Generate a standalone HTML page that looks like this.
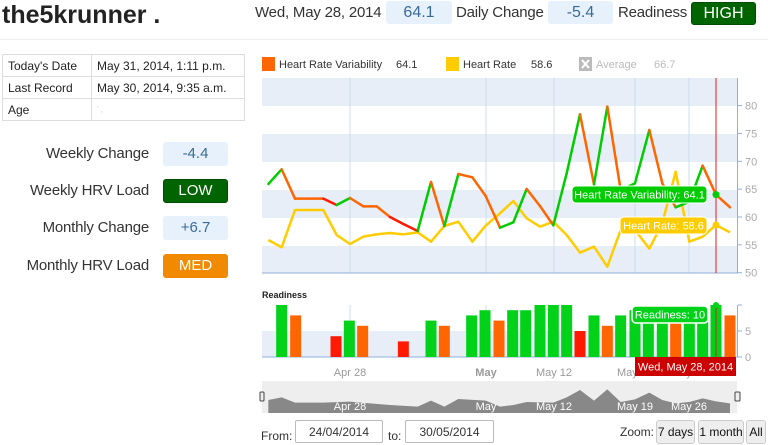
<!DOCTYPE html>
<html><head><meta charset="utf-8">
<style>
*{margin:0;padding:0;box-sizing:border-box}
body{width:768px;height:445px;background:#fff;font-family:"Liberation Sans",Arial,sans-serif;position:relative;overflow:hidden;color:#333}
.a{position:absolute}
.box{position:absolute;text-align:center;border-radius:3px}
.blue{background:#e7f1fb;color:#3a6a98}
.g{background:#006400;color:#fff;border:1px solid #004d00}
.o{background:#f28a00;color:#fff}
table{position:absolute;left:2px;top:54px;width:243px;border-collapse:collapse;font-size:12px;color:#222}
td{border:1px solid #ddd;height:22px;padding-left:5px}
.lbl{position:absolute;right:619px;font-size:15px;color:#333;text-align:right;white-space:nowrap;letter-spacing:-0.2px}
.inp{position:absolute;border:1px solid #bbb;border-radius:2px;font-size:12px;text-align:center;line-height:22px;height:23px}
.btn{position:absolute;background:#eee;border:1px solid #ccc;border-radius:3px;font-size:12px;text-align:center;line-height:22px;height:24px;color:#111}
.h{position:absolute;top:4px;font-size:15px;line-height:18px;letter-spacing:-0.2px;white-space:nowrap}
</style></head><body>
<div class="a" style="left:2px;top:0;font-size:25px;font-weight:bold;color:#222;line-height:30px">the5krunner .</div>
<div class="h" style="left:255px">Wed, May 28, 2014</div>
<div class="box blue" style="left:386px;top:1px;width:66px;height:23px;font-size:16px;line-height:23px">64.1</div>
<div class="h" style="left:456px">Daily Change</div>
<div class="box blue" style="left:548px;top:1px;width:65px;height:23px;font-size:16px;line-height:23px">-5.4</div>
<div class="h" style="left:618px">Readiness</div>
<div class="box g" style="left:691px;top:2px;width:65px;height:23px;font-size:16px;line-height:21px">HIGH</div>
<div class="a" style="left:0;top:39px;width:768px;height:1px;background:#eee"></div>
<table><tr><td style="width:89px">Today's Date</td><td>May 31, 2014, 1:11 p.m.</td></tr>
<tr><td>Last Record</td><td>May 30, 2014, 9:35 a.m.</td></tr>
<tr><td>Age</td><td style="color:#ccc;font-size:8px">' ,</td></tr></table>

<div class="lbl" style="top:145px">Weekly Change</div>
<div class="box blue" style="left:163px;top:142px;width:65px;height:24px;font-size:15px;line-height:24px">-4.4</div>
<div class="lbl" style="top:182px">Weekly HRV Load</div>
<div class="box g" style="left:163px;top:179px;width:65px;height:24px;font-size:15px;line-height:22px">LOW</div>
<div class="lbl" style="top:219px">Monthly Change</div>
<div class="box blue" style="left:163px;top:216px;width:65px;height:24px;font-size:15px;line-height:24px">+6.7</div>
<div class="lbl" style="top:257px">Monthly HRV Load</div>
<div class="box o" style="left:163px;top:254px;width:65px;height:24px;font-size:15px;line-height:24px">MED</div>

<svg class="a" style="left:0;top:0" width="768" height="445" id="s" font-family="Liberation Sans, Arial, sans-serif"></svg>

<div class="a" style="left:261px;top:429px;font-size:12px">From:</div>
<div class="inp" style="left:295px;top:420px;width:88px">24/04/2014</div>
<div class="a" style="left:388px;top:429px;font-size:12px">to:</div>
<div class="inp" style="left:405px;top:420px;width:89px">30/05/2014</div>
<div class="a" style="left:620px;top:425px;font-size:12px">Zoom:</div>
<div class="btn" style="left:656px;top:420px;width:39px">7 days</div>
<div class="btn" style="left:698px;top:420px;width:46px">1 month</div>
<div class="btn" style="left:746px;top:420px;width:20px">All</div>

<script>
var s='';
function X(z){return 255+z/3}
function Y(z){return 70+z/3}
s+='<rect x="262" y="57" width="13" height="14" fill="#ff6600"/><text x="279" y="68" font-size="11" fill="#333">Heart Rate Variability</text><text x="396" y="68" font-size="11" fill="#333">64.1</text>';
s+='<rect x="446" y="57" width="13" height="14" fill="#ffcc00"/><text x="463" y="68" font-size="11" fill="#333">Heart Rate</text><text x="531" y="68" font-size="11" fill="#333">58.6</text>';
s+='<rect x="579" y="57" width="13" height="14" fill="#bbb"/><path d="M582 60l7 8M589 60l-7 8" stroke="#fff" stroke-width="2"/><text x="596" y="68" font-size="11" fill="#bbb">Average</text><text x="654" y="68" font-size="11" fill="#bbb">66.7</text>';
[[78,106],[134,162],[190,218],[246,273]].forEach(function(b){s+='<rect x="262" y="'+b[0]+'" width="475" height="'+(b[1]-b[0])+'" fill="#e8eef8"/>'});
[350,486,554,635,689].forEach(function(x){s+='<line x1="'+x+'" y1="78" x2="'+x+'" y2="273" stroke="#cddcee"/>';s+='<line x1="'+x+'" y1="305" x2="'+x+'" y2="357" stroke="#cddcee"/>';s+='<line x1="'+x+'" y1="381" x2="'+x+'" y2="413" stroke="#fff"/>'});
s+='<line x1="262" y1="273" x2="738" y2="273" stroke="#8fb0dc"/><line x1="737.5" y1="78" x2="737.5" y2="273" stroke="#8fb0dc"/>';
[80,75,70,65,60,55,50].forEach(function(v){var y=272.7-(v-50)*5.57;s+='<line x1="738" y1="'+y+'" x2="742" y2="'+y+'" stroke="#8fb0dc"/><text x="745" y="'+(y+4)+'" font-size="11" fill="#aaa">'+v+'</text>'});
var hr=[[40,510],[80,532],[120,420],[160,420],[205,420],[245,495],[285,522],[325,500],[365,493],[405,489],[445,493],[488,487],[528,515],[568,468],[610,455],[652,515],[692,467],[735,430],[775,393],[815,445],[855,470],[895,455],[935,495],[975,548],[1017,530],[1057,590],[1097,480],[1140,480],[1183,536],[1222,460],[1262,305],[1303,515],[1343,500],[1383,465],[1425,487]];
s+='<polyline fill="none" stroke="#ffcc00" stroke-width="2.5" stroke-linejoin="round" points="'+hr.map(function(p){return X(p[0])+','+Y(p[1])}).join(' ')+'"/>';
var hv=[[40,342],[80,298],[120,386],[160,386],[205,386],[245,405],[285,384],[325,409],[365,409],[405,441],[445,462],[488,483],[528,336],[568,468],[610,312],[652,322],[692,378],[735,473],[775,457],[815,357],[855,408],[895,466],[935,310],[975,133],[1017,343],[1057,110],[1097,360],[1140,340],[1183,180],[1222,340],[1262,412],[1303,395],[1343,287],[1383,374],[1425,412]];
var red={9:1,10:1,22:1};
for(var i=0;i<hv.length-1;i++){var a=hv[i],b=hv[i+1];var c=b[1]<a[1]?'#00cc00':(red[i]?'#ff1a00':'#ff6600');if(i==4)c='#ff1a00';
s+='<line x1="'+X(a[0])+'" y1="'+Y(a[1])+'" x2="'+X(b[0])+'" y2="'+Y(b[1])+'" stroke="'+c+'" stroke-width="2.5" stroke-linecap="round"/>';}
s+='<line x1="716" y1="78" x2="716" y2="273" stroke="#d22" stroke-width="1"/>';
s+='<circle cx="716" cy="194.6" r="3.5" fill="#00cc00"/><circle cx="716" cy="225" r="3.5" fill="#ffcc00"/>';
s+='<rect x="572" y="186" width="135" height="17" rx="4" fill="#00cc00" stroke="#fff"/><text x="639.5" y="198.5" font-size="11" fill="#fff" text-anchor="middle">Heart Rate Variability: 64.1</text>';
s+='<rect x="620" y="217" width="87" height="17" rx="4" fill="#ffcc00" stroke="#fff"/><text x="663.5" y="229.5" font-size="11" fill="#fff" text-anchor="middle">Heart Rate: 58.6</text>';
s+='<text x="262" y="298" font-size="9" font-weight="bold" fill="#222">Readiness</text>';
s+='<rect x="262" y="331" width="475" height="26" fill="#e8eef8"/>';
s+='<line x1="737.5" y1="305" x2="737.5" y2="357" stroke="#8fb0dc"/><line x1="262" y1="357" x2="738" y2="357" stroke="#8fb0dc"/>';
[[10,305],[5,331],[0,357]].forEach(function(t){s+='<line x1="738" y1="'+t[1]+'" x2="742" y2="'+t[1]+'" stroke="#8fb0dc"/>';s+='<text x="745" y="'+(t[1]+4)+'" font-size="11" fill="#aaa">'+(t[0]==10?'':t[0])+'</text>'});
var G='#00d21a',O='#ff6600',R='#ff1a00';
var bars=[[80,10,G],[122,8,O],[243,4,R],[283,7,G],[323,6,O],[445,3,R],[528,7,G],[568,6,O],[650,8,G],[690,9,G],[732,7,O],[773,9,G],[812,9,G],[855,10,G],[895,10,G],[935,10,G],[975,5,R],[1017,8,G],[1057,6,O],[1097,8,G],[1140,9,G],[1180,9,G],[1222,9,G],[1262,8,O],[1303,9,G],[1343,9,G],[1383,10,G],[1425,8,O]];
bars.forEach(function(b){var h=b[1]*5.2;s+='<rect x="'+(X(b[0])-5.5)+'" y="'+(357-h)+'" width="11" height="'+h+'" fill="'+b[2]+'"/>'});
s+='<line x1="716" y1="305" x2="716" y2="357" stroke="#d22"/><circle cx="716" cy="305" r="3" fill="#00d21a"/>';
s+='<rect x="632" y="306" width="76" height="17" rx="4" fill="#00d21a" stroke="#fff" stroke-width="1.5"/><text x="670" y="318.5" font-size="11" fill="#fff" text-anchor="middle">Readiness: 10</text>';
[['Apr 28',350,''],['May',486,'bold'],['May 12',554,''],['May 19',635,''],['May 26',689,'']].forEach(function(t){s+='<text x="'+t[1]+'" y="376" font-size="11" fill="#999" font-weight="'+t[2]+'" text-anchor="middle">'+t[0]+'</text>'});
s+='<rect x="635" y="357" width="101" height="19" fill="#cc0000"/><text x="685.5" y="370.5" font-size="11" fill="#fff" text-anchor="middle">Wed, May 28, 2014</text>';
s+='<rect x="262" y="381" width="475" height="32" fill="#eee"/>';
var nv=[[40,360],[80,352],[120,368],[205,368],[285,365],[405,375],[488,380],[528,362],[568,380],[610,357],[692,362],[735,380],[775,375],[815,366],[895,368],[935,352],[975,330],[1017,362],[1057,328],[1097,366],[1140,358],[1183,338],[1222,360],[1262,370],[1303,366],[1343,355],[1383,364],[1425,370]];
s+='<polygon fill="#888" points="'+X(40)+',413 '+nv.map(function(p){return X(p[0])+','+(280+p[1]/3)}).join(' ')+' '+X(1425)+',413"/>';
[['Apr 28',350],['May',486],['May 12',554],['May 19',635],['May 26',689]].forEach(function(t){s+='<text x="'+t[1]+'" y="410" font-size="11" fill="#fff" text-anchor="middle">'+t[0]+'</text>'});
s+='<rect x="260" y="392" width="4" height="9" rx="1" fill="#eee" stroke="#444"/><rect x="735" y="392" width="5" height="9" rx="1" fill="#eee" stroke="#444"/>';
document.getElementById('s').innerHTML=s;
</script>
</body></html>
